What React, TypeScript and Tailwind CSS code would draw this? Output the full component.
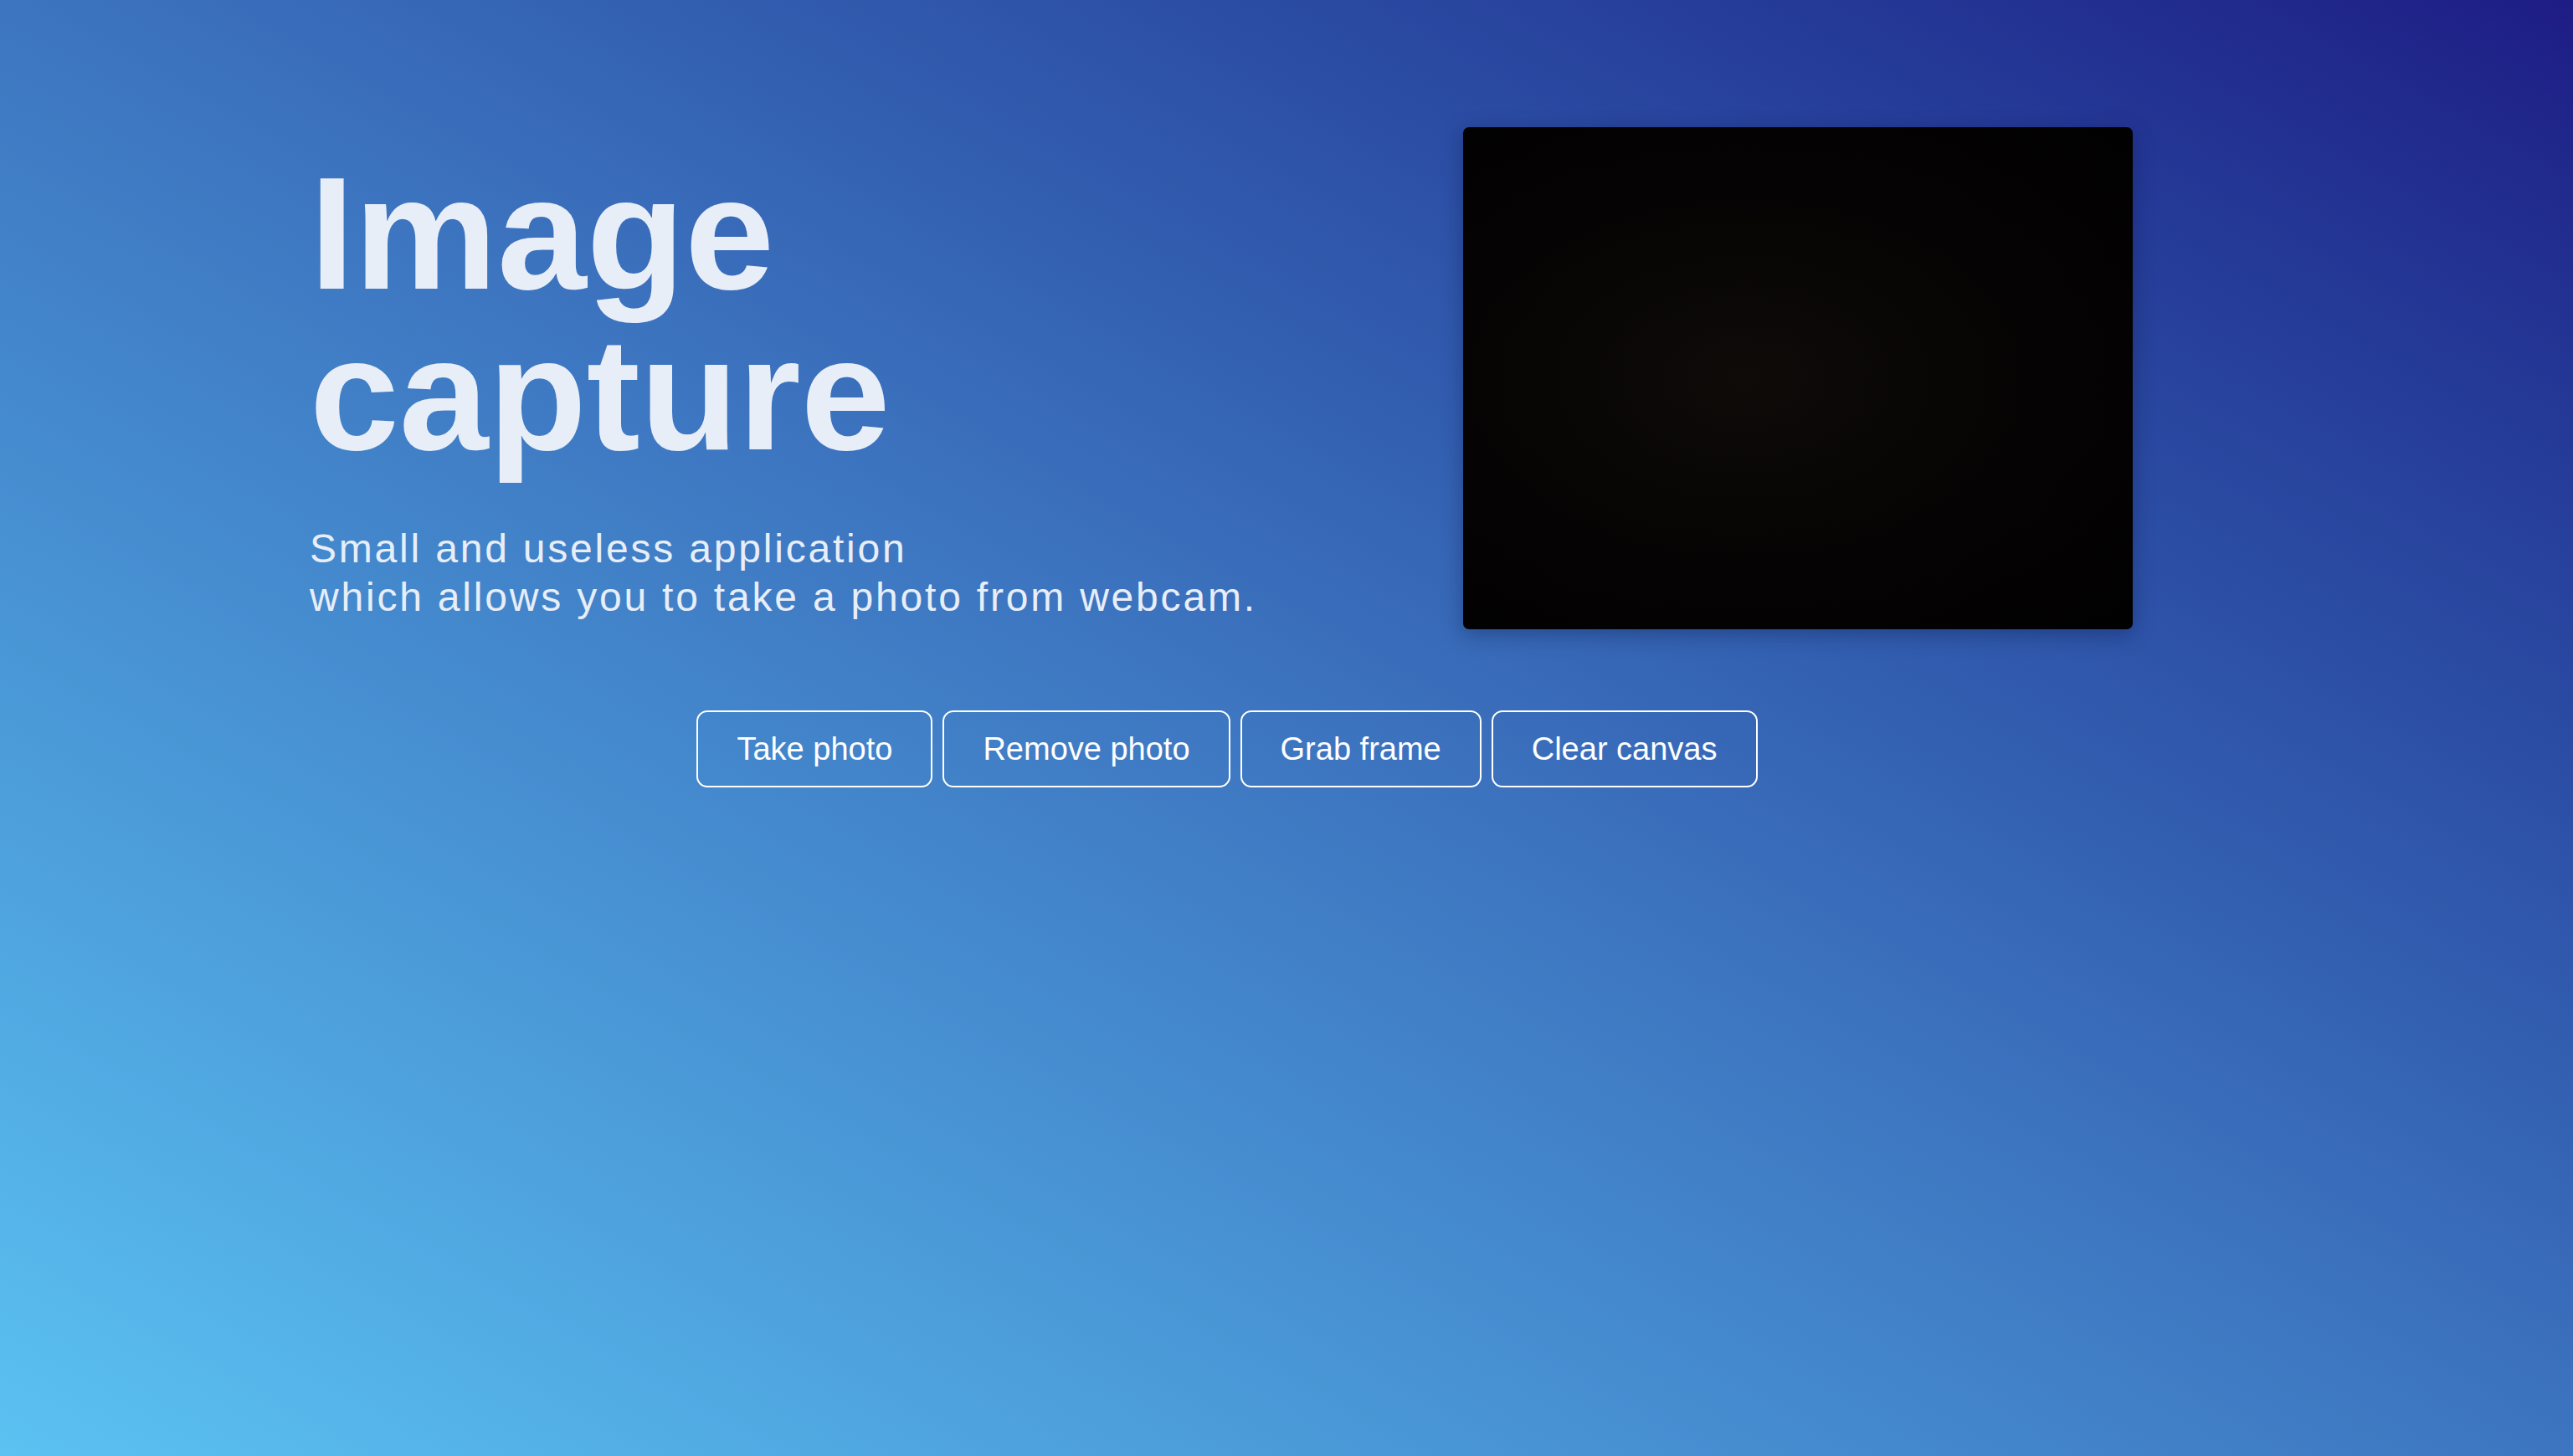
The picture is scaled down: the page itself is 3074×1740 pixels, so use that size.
import React from 'react';

const buttons = ['Take photo', 'Remove photo', 'Grab frame', 'Clear canvas'];

const App = () => {
  return (
    <div className="min-h-screen w-full bg-linear-to-tr from-[#5bc2f2] via-[#3d75c0] to-[#1e1c85] font-['Liberation_Sans',Arial,sans-serif] text-[#e8eef8]">
      <div className="flex pt-[152px] pl-[370px]">
        {/* Intro */}
        <div className="w-[1378px] pt-[31px]">
          <h1 className="text-[192px] font-bold leading-none">
            Image
            <br />
            capture
          </h1>
          <p className="mt-[60px] text-[48px] leading-[1.2] tracking-[2.8px]">
            Small and useless application
            <br />
            which allows you to take a photo from webcam.
          </p>
        </div>

        {/* Webcam preview */}
        <div className="h-[600px] w-[800px] rounded-[7px] bg-[radial-gradient(ellipse_at_42%_50%,#0e0b09_0%,#050303_55%,#020101_100%)] shadow-[0_6px_24px_rgba(10,20,60,0.35)]" />
      </div>

      {/* Controls */}
      <div className="ml-[370px] mt-[97px] flex w-[2192px] justify-center gap-[12px]">
        {buttons.map((label) => (
          <button
            key={label}
            className="flex h-[92px] items-center rounded-[13px] border-2 border-white bg-transparent px-[46px] text-[38px] text-white"
          >
            {label}
          </button>
        ))}
      </div>
    </div>
  );
};

export default App;
